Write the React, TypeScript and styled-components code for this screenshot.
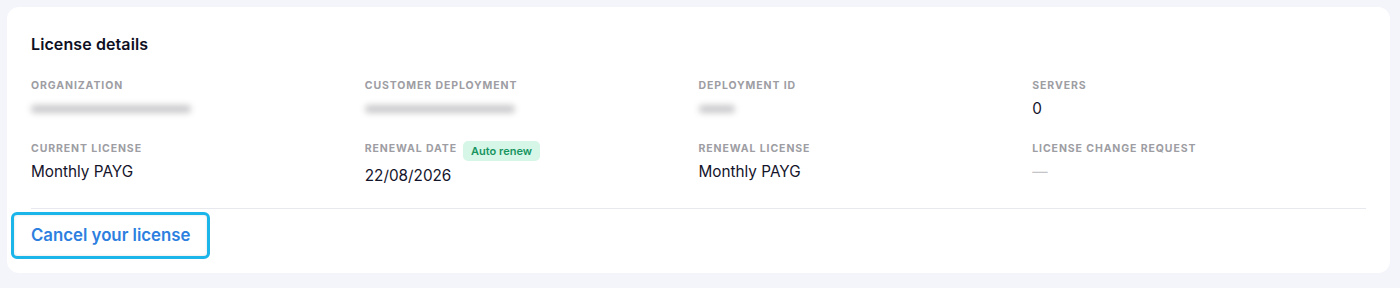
import styled, { createGlobalStyle } from "styled-components"

const GlobalStyle = createGlobalStyle`
  body {
    margin: 0;
    background: #f4f5fa;
    font-family: Inter, "Open Sans", sans-serif;
    color: #14142b;
  }
`

const Page = styled.div`
  padding: 7px 10px 15px 7px;
`

const Card = styled.section`
  background: #ffffff;
  border-radius: 12px;
  padding: 25px 24px 14px 24px;
`

const Title = styled.h2`
  margin: 0 0 22px 0;
  font-size: 16px;
  font-weight: 600;
  color: #0f0f23;
  letter-spacing: 0.1px;
  line-height: 24px;
`

const Grid = styled.div`
  display: grid;
  grid-template-columns: repeat(4, 1fr);
  row-gap: 21px;
  padding-bottom: 21px;
  border-bottom: 1px solid #e8e9ee;
`

const Field = styled.div`
  display: flex;
  flex-direction: column;
  gap: 4px;
`

const LabelRow = styled.div`
  display: flex;
  align-items: flex-start;
  gap: 6px;
`

const Label = styled.span`
  font-size: 10.5px;
  line-height: 16px;
  font-weight: 700;
  letter-spacing: 0.9px;
  text-transform: uppercase;
  color: #9d9da3;
`

const Badge = styled.span`
  background: #d6f7e7;
  color: #17945f;
  font-size: 11px;
  font-weight: 600;
  border-radius: 5px;
  padding: 2px 8px;
  line-height: 16px;
`

const Value = styled.span<{ $muted?: boolean }>`
  font-size: 15.3px;
  line-height: 22px;
  color: ${(p) => (p.$muted ? "#c4c4c8" : "#14142b")};
`

const Blurred = styled.span<{ $w: number }>`
  display: block;
  width: ${(p) => p.$w}px;
  height: 8px;
  margin: 7px 0;
  border-radius: 4px;
  background: #c9c9cc;
  filter: blur(3px);
`

const Footer = styled.div`
  padding-top: 3px;
  margin-left: -20px;
`

const CancelButton = styled.button`
  font-family: inherit;
  background: #ffffff;
  border: 3px solid #1bb5ea;
  border-radius: 6px;
  padding: 9px 17px;
  font-size: 16.8px;
  line-height: 23px;
  font-weight: 600;
  color: #2d7fe0;
  cursor: pointer;
  box-shadow: inset 0 0 3px rgba(0, 0, 0, 0.12);
`

type Item = { label: string; value?: string; blur?: number; badge?: string; muted?: boolean }

const items: Item[] = [
  { label: "Organization", blur: 160 },
  { label: "Customer deployment", blur: 150 },
  { label: "Deployment ID", blur: 36 },
  { label: "Servers", value: "0" },
  { label: "Current license", value: "Monthly PAYG" },
  { label: "Renewal date", value: "22/08/2026", badge: "Auto renew" },
  { label: "Renewal license", value: "Monthly PAYG" },
  { label: "License change request", value: "—", muted: true },
]

export default function App() {
  return (
    <>
      <GlobalStyle />
      <Page>
        <Card>
          <Title>License details</Title>
          <Grid>
            {items.map((it) => (
              <Field key={it.label}>
                <LabelRow>
                  <Label>{it.label}</Label>
                  {it.badge && <Badge>{it.badge}</Badge>}
                </LabelRow>
                {it.blur ? <Blurred $w={it.blur} /> : <Value $muted={it.muted}>{it.value}</Value>}
              </Field>
            ))}
          </Grid>
          <Footer>
            <CancelButton>Cancel your license</CancelButton>
          </Footer>
        </Card>
      </Page>
    </>
  )
}
